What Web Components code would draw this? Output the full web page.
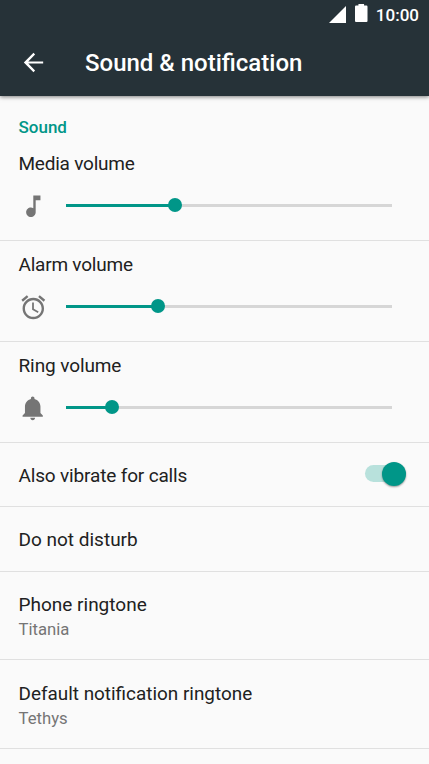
<!DOCTYPE html>
<html lang="en">
<head>
<meta charset="utf-8">
<meta name="viewport" content="width=device-width, initial-scale=1">
<title>Sound &amp; notification</title>
<style>
  html, body {
    margin: 0;
    height: 100%;
    overflow: hidden;
  }
</style>
</head>
<body>
<settings-screen>
  <status-bar slot="header" time="10:00"></status-bar>
  <app-toolbar slot="header">Sound &amp; notification</app-toolbar>
  <preference-category>Sound</preference-category>
  <volume-preference icon="music" value="33.4" style="letter-spacing: -0.22px">Media volume</volume-preference>
  <volume-preference icon="alarm" value="28.4" style="letter-spacing: -0.22px">Alarm volume</volume-preference>
  <volume-preference icon="bell" value="14.2" style="letter-spacing: -0.1px">Ring volume</volume-preference>
  <settings-preference style="letter-spacing: -0.16px">Also vibrate for calls<toggle-switch slot="widget" checked></toggle-switch></settings-preference>
  <settings-preference>Do not disturb</settings-preference>
  <settings-preference two-line>Phone ringtone<span slot="summary">Titania</span></settings-preference>
  <settings-preference two-line style="font-size: 18.9px">Default notification ringtone<span slot="summary">Tethys</span></settings-preference>
</settings-screen>

<script>
/**
 * Base class that renders the static `markup` of a subclass in its shadow root.
 */
class BaseElement extends HTMLElement {
  static markup = "";

  constructor() {
    super();
    this.attachShadow({ mode: "open" });
    this.shadowRoot.innerHTML = this.constructor.markup;
  }
}

/**
 * The whole screen: a dark header over a list of preferences.
 */
class SettingsScreen extends BaseElement {
  static markup = `
    <style>
      :host {
        --accent: #009688;
        --primary-text: #212121;
        --secondary-text: #757575;
        display: flex;
        flex-direction: column;
        height: 100vh;
        overflow: hidden;
        background: #fafafa;
        color: var(--primary-text);
        font-family: Roboto, "Liberation Sans", sans-serif;
        font-size: 19px;
      }
      header {
        flex: none;
        z-index: 1;
        background: #263238;
        color: #fff;
        box-shadow: 0 1px 4px rgba(0, 0, 0, 0.5);
      }
      main {
        flex: 1;
        min-height: 0;
      }
    </style>
    <header><slot name="header"></slot></header>
    <main><slot></slot></main>
  `;
}

/**
 * System status bar with the signal, the battery and the clock.
 */
class StatusBar extends BaseElement {
  static markup = `
    <style>
      :host {
        display: flex;
        align-items: center;
        justify-content: flex-end;
        box-sizing: border-box;
        height: 29px;
        padding-right: 10px;
        font-size: 17px;
        font-weight: 500;
      }
      svg { fill: currentColor; }
      .signal { margin-right: 9px; }
      .battery { margin-right: 8px; margin-top: -3px; }
      .time { line-height: 20px; padding-top: 1px; }
    </style>
    <svg class="signal" width="17" height="17" viewBox="0 0 17 17"><path d="M17 0v17H0z"/></svg>
    <svg class="battery" width="12.500" height="18" viewBox="0 0 12 17" preserveAspectRatio="none"><path d="M3.300 0h5.400v1.500h2.300q1 0 1 1V16q0 1-1 1H1q-1 0-1-1V2.500q0-1 1-1h2.300z"/></svg>
    <span class="time"></span>
  `;

  connectedCallback() {
    this.shadowRoot.querySelector(".time").textContent = this.getAttribute("time");
  }
}

/**
 * Toolbar with an up button and the title.
 */
class AppToolbar extends BaseElement {
  static markup = `
    <style>
      :host {
        display: flex;
        align-items: center;
        height: 67px;
        padding-left: 19px;
      }
      button {
        display: flex;
        margin: 0 37px 0 0;
        padding: 0;
        border: 0;
        background: none;
        color: inherit;
      }
      svg { fill: currentColor; }
      h1 {
        margin: 0;
        padding-top: 1px;
        font-size: 24px;
        font-weight: 500;
        line-height: 28px;
        white-space: nowrap;
      }
    </style>
    <button aria-label="Navigate up">
      <svg width="29" height="29" viewBox="0 0 24 24"><path d="M20 11.100H7.700l5.600-5.800L12 4l-8 8 8 8 1.300-1.300L7.700 12.900H20z"/></svg>
    </button>
    <h1><slot></slot></h1>
  `;
}

/**
 * Heading of a group of preferences.
 */
class PreferenceCategory extends BaseElement {
  static markup = `
    <style>
      :host {
        display: block;
        box-sizing: border-box;
        height: 44px;
        padding: 21px 18.5px 0;
        color: var(--accent);
        font-size: 17px;
        font-weight: 500;
        line-height: 20px;
      }
    </style>
    <slot></slot>
  `;
}

const ICONS = {
  music: "M12 3v10.550c-.590-.340-1.270-.550-2-.550-2.210 0-4 1.790-4 4s1.790 4 4 4 4-1.790 4-4V7h4V3h-6z",
  alarm: "M22 5.720l-4.600-3.860-1.290 1.530 4.600 3.860L22 5.720zM7.880 3.390L6.600 1.860 2 5.710l1.290 1.530 4.590-3.850zM12.500 8H11v6l4.750 2.850.750-1.230-4-2.370V8zM12 4c-4.970 0-9 4.030-9 9s4.020 9 9 9c4.970 0 9-4.030 9-9s-4.030-9-9-9zm0 16c-3.870 0-7-3.130-7-7s3.130-7 7-7 7 3.130 7 7-3.130 7-7 7z",
  bell: "M11.500 22c1.100 0 2-.9 2-2h-4c0 1.100.9 2 2 2zm6.500-6v-5.500c0-3.070-2.130-5.640-5-6.320V3.500c0-.830-.670-1.500-1.500-1.500S10 2.670 10 3.500v.680c-2.870.680-5 3.250-5 6.320V16l-2 2v1h17v-1l-2-2z",
};

/**
 * Preference with an icon and a slider.
 *
 * @property {string} icon - A key of ICONS.
 * @property {string} value - The slider position, in percent.
 */
class VolumePreference extends BaseElement {
  static markup = `
    <style>
      :host {
        display: block;
        box-sizing: border-box;
        height: 101px;
        padding: 12px 37.5px 0 18.5px;
        border-bottom: 1px solid #e0e0e0;
      }
      .title { line-height: 24px; }
      .row {
        display: flex;
        align-items: center;
        gap: 18.9px;
        height: 29px;
        margin-top: 15px;
      }
      svg {
        flex: none;
        margin-top: 1px;
        fill: var(--secondary-text);
      }
      .track {
        display: flex;
        align-items: center;
        flex: 1;
        height: 3px;
        margin-top: -1px;
        background: #d6d6d6;
      }
      .fill {
        width: var(--value);
        height: 3px;
        background: var(--accent);
      }
      .thumb {
        flex: none;
        width: 14px;
        height: 14px;
        margin-left: -7px;
        border-radius: 50%;
        background: var(--accent);
      }
    </style>
    <div class="title"><slot></slot></div>
    <div class="row">
      <svg width="28.600" height="28.600" viewBox="0 0 24 24"><path/></svg>
      <div class="track"><div class="fill"></div><div class="thumb"></div></div>
    </div>
  `;

  connectedCallback() {
    this.shadowRoot.querySelector("path").setAttribute("d", ICONS[this.getAttribute("icon")]);
    this.shadowRoot.querySelector(".track").style.setProperty("--value", `${this.getAttribute("value")}%`);
  }
}

/**
 * Plain preference: a title, with an optional summary and widget.
 */
class SettingsPreference extends BaseElement {
  static markup = `
    <style>
      :host {
        display: flex;
        align-items: center;
        justify-content: space-between;
        box-sizing: border-box;
        height: 64.4px;
        padding: 2.5px 21px 0 18.5px;
        border-bottom: 1px solid #e0e0e0;
      }
      :host([two-line]) {
        height: 88.4px;
        padding-top: 3.5px;
      }
      .title { line-height: 24px; }
      ::slotted([slot="summary"]) {
        display: block;
        margin-top: 1px;
        color: var(--secondary-text);
        font-size: 16.7px;
        line-height: 23px;
      }
    </style>
    <div>
      <div class="title"><slot></slot></div>
      <slot name="summary"></slot>
    </div>
    <slot name="widget"></slot>
  `;
}

/**
 * On/off switch.
 */
class ToggleSwitch extends BaseElement {
  static markup = `
    <style>
      :host {
        display: flex;
        align-items: center;
        justify-content: flex-start;
        box-sizing: border-box;
        width: 41.5px;
        height: 17px;
        margin: -4px 2px 0 0;
        border-radius: 9px;
        background: #b9b9b9;
      }
      .thumb {
        flex: none;
        width: 24px;
        height: 24px;
        border-radius: 50%;
        background: #f1f1f1;
        box-shadow: 0 1px 2px rgba(0, 0, 0, 0.4);
      }
      :host([checked]) {
        justify-content: flex-end;
        background: #b8e1dc;
      }
      :host([checked]) .thumb { background: var(--accent); }
    </style>
    <div class="thumb"></div>
  `;
}

customElements.define("settings-screen", SettingsScreen);
customElements.define("status-bar", StatusBar);
customElements.define("app-toolbar", AppToolbar);
customElements.define("preference-category", PreferenceCategory);
customElements.define("volume-preference", VolumePreference);
customElements.define("settings-preference", SettingsPreference);
customElements.define("toggle-switch", ToggleSwitch);
</script>
</body>
</html>
